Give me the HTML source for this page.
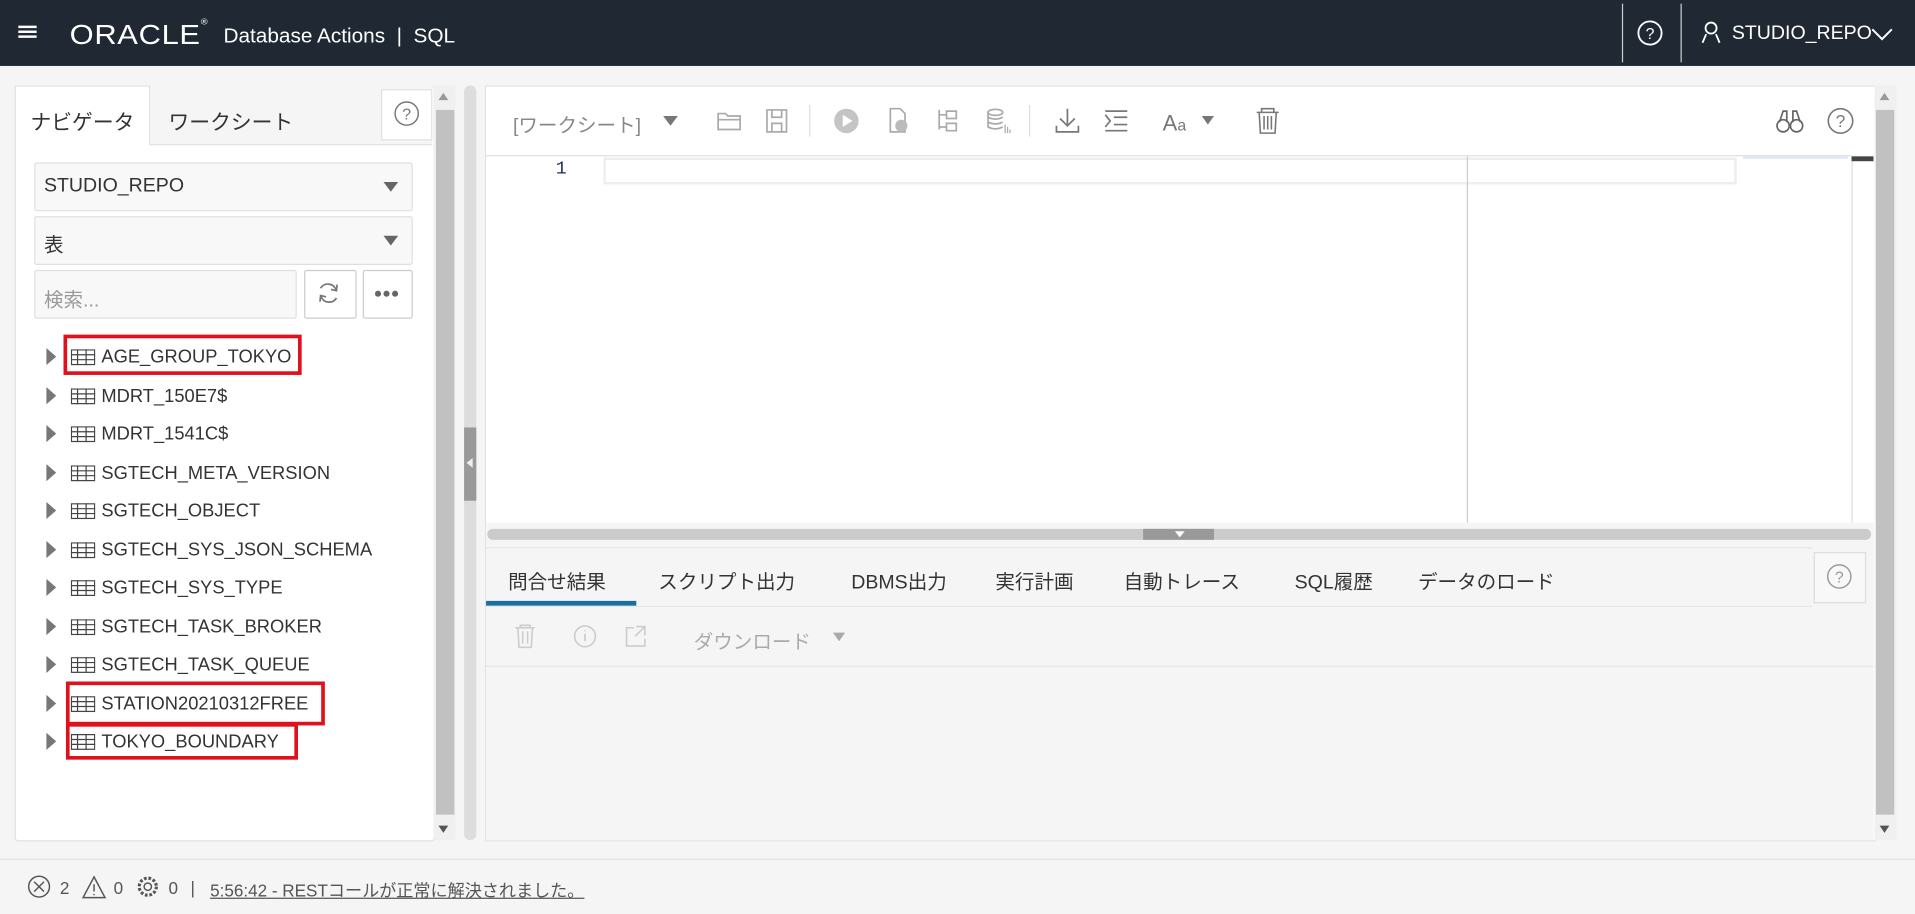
<!DOCTYPE html>
<html><head><meta charset="utf-8"><style>
html,body{margin:0;padding:0;width:1915px;height:914px;overflow:hidden;background:#f5f5f5}
#w{position:absolute;left:0;top:0;width:1568px;height:748px;transform:scale(1.22131);transform-origin:0 0;font-family:"Liberation Sans","Noto Sans CJK JP",sans-serif;color:#333;background:#f5f5f5}
.a{position:absolute}
.hdr{left:0;top:0;width:1568px;height:54px;background:#1f2833;color:#fff}
.t{font-size:16px;white-space:nowrap}
.box{background:#fff;border:1px solid #e2e2e2}
.sel{background:#f8f8f8;border:1px solid #e0e0e0;border-radius:2px}
.tri{width:0;height:0;border-left:6px solid transparent;border-right:6px solid transparent;border-top:8px solid #666}
.item{left:38px;height:31px;font-size:15px;color:#333}
.item .ar{position:absolute;left:0;top:5px;width:0;height:0;border-top:7px solid transparent;border-bottom:7px solid transparent;border-left:8px solid #777}
.item .ic{position:absolute;left:20px;top:6px}
.item span{position:absolute;left:45px;top:4px;white-space:nowrap}
.red{border:3px solid #e0101c}
.tab2{font-size:16px;color:#333;top:463px}
.g{stroke:#aaa;fill:none;stroke-width:1.4}
</style></head><body><div id="w">
<div class="a hdr">
 <div class="a" style="left:15px;top:21px;width:15px;height:2px;background:#fff;box-shadow:0 4px 0 #fff,0 8px 0 #fff"></div>
 <div class="a" style="left:57px;top:15px;font-size:23px;letter-spacing:0.5px;transform:scaleX(1.1);transform-origin:0 0">ORACLE<span style="font-size:7px;vertical-align:top">®</span></div>
 <div class="a t" style="left:183px;top:20px;font-size:17px">Database Actions &nbsp;| &nbsp;SQL</div>
 <div class="a" style="left:1328px;top:3px;width:1px;height:48px;background:#ccc"></div>
 <div class="a" style="left:1376px;top:3px;width:1px;height:48px;background:#ccc"></div>
 <svg class="a" style="left:1340px;top:16px" width="22" height="22"><circle cx="11" cy="11" r="9.5" fill="none" stroke="#fff" stroke-width="1.5"/><text x="11" y="16" font-size="13" fill="#fff" text-anchor="middle" font-family="Liberation Sans">?</text></svg>
 <svg class="a" style="left:1392px;top:17px" width="18" height="20"><circle cx="9" cy="6" r="4.5" fill="none" stroke="#fff" stroke-width="1.5"/><path d="M2 18 L5 11 M16 18 L13 11" stroke="#fff" stroke-width="1.5"/></svg>
 <div class="a t" style="left:1418px;top:19px;font-size:16px">STUDIO_REPO</div>
 <svg class="a" style="left:1531px;top:22px" width="20" height="12"><path d="M2 2 L10 10 L18 2" fill="none" stroke="#fff" stroke-width="1.6"/></svg>
</div>

<div class="a box" style="left:12px;top:70px;width:342px;height:617px;border-radius:3px"></div>
<div class="a" style="left:121px;top:70px;width:233px;height:48px;background:#f5f5f5;border-bottom:1px solid #e2e2e2"></div>
<div class="a" style="left:12px;top:70px;width:109px;height:48px;background:#fff;border:1px solid #e2e2e2;border-bottom:none"></div>
<div class="a t" style="left:25px;top:86px;font-size:17px">ナビゲータ</div>
<div class="a t" style="left:138px;top:86px;font-size:17px">ワークシート</div>
<div class="a box" style="left:312px;top:73px;width:40px;height:40px"></div>
<svg class="a" style="left:322px;top:82px" width="22" height="22"><circle cx="11" cy="11" r="9.5" fill="none" stroke="#777" stroke-width="1.2"/><text x="11" y="16" font-size="13" fill="#777" text-anchor="middle" font-family="Liberation Sans">?</text></svg>

<div class="a sel" style="left:28px;top:133px;width:308px;height:38px"></div>
<div class="a t" style="left:36px;top:144px">STUDIO_REPO</div>
<div class="a tri" style="left:314px;top:149px"></div>
<div class="a sel" style="left:28px;top:177px;width:308px;height:38px"></div>
<div class="a t" style="left:36px;top:187px">表</div>
<div class="a tri" style="left:314px;top:193px"></div>
<div class="a sel" style="left:28px;top:221px;width:213px;height:38px"></div>
<div class="a t" style="left:36px;top:232px;color:#999">検索...</div>
<div class="a box" style="left:249px;top:221px;width:41px;height:38px;border-color:#ccc;border-radius:2px"></div>
<svg class="a" style="left:259px;top:230px" width="20" height="20"><path d="M16 7 A7 7 0 0 0 3.5 6 M4 13 A7 7 0 0 0 16.5 14" fill="none" stroke="#777" stroke-width="1.4"/><path d="M17 3 L16.5 8 L12 7 M3 17 L3.5 12 L8 13" fill="none" stroke="#777" stroke-width="1.4"/></svg>
<div class="a box" style="left:297px;top:221px;width:39px;height:38px;border-color:#ccc;border-radius:2px"></div>
<div class="a" style="left:307px;top:238px;width:5px;height:5px;border-radius:50%;background:#666;box-shadow:7px 0 0 #666,14px 0 0 #666"></div>

<div id="items"></div>
<div class="a red" style="left:52px;top:274px;width:189px;height:27px"></div>
<div class="a red" style="left:54px;top:558px;width:206px;height:30px"></div>
<div class="a red" style="left:54px;top:592px;width:184px;height:24px"></div>

<div class="a" style="left:355px;top:70px;width:18px;height:618px;background:#f0f0f0"></div>
<div class="a" style="left:357px;top:90px;width:15px;height:577px;background:#c1c1c1"></div>
<div class="a" style="left:359px;top:76px;width:0;height:0;border-left:4px solid transparent;border-right:4px solid transparent;border-bottom:6px solid #999"></div>
<div class="a" style="left:359px;top:676px;width:0;height:0;border-left:4px solid transparent;border-right:4px solid transparent;border-top:6px solid #555"></div>
<div class="a" style="left:380px;top:70px;width:10px;height:618px;background:#ddd;border-radius:5px"></div>
<div class="a" style="left:380px;top:350px;width:10px;height:60px;background:#999"></div>
<div class="a" style="left:382px;top:375px;width:0;height:0;border-top:4px solid transparent;border-bottom:4px solid transparent;border-right:5px solid #eee"></div>

<div class="a box" style="left:397px;top:70px;width:1137px;height:617px"></div>
<div class="a" style="left:398px;top:127px;width:1118px;height:1px;background:#e0e0e0"></div>
<div class="a t" style="left:420px;top:89px;font-size:16px;color:#888">[ワークシート]</div>
<div class="a tri" style="left:543px;top:95px;border-top-color:#777"></div>
<svg class="a" style="left:586px;top:86px" width="480" height="26">
 <path class="g" d="M2 7 h6 l2 2 h10 v11 h-18z M2 12 h18"/>
 <path class="g" d="M42 4 h16 v18 h-16z M46 4 v6 h8 v-6 M46 22 v-7 h8 v7"/>
 <line x1="77" y1="0" x2="77" y2="26" stroke="#ddd"/>
 <circle cx="107" cy="13" r="10" fill="#c4c4c4"/><path d="M104 8 L112 13 L104 18z" fill="#fff"/>
 <path class="g" d="M143 3 h8 l4 4 v15 h-12z"/><circle cx="152" cy="17" r="5" fill="#bbb"/>
 <path class="g" d="M183 4 v16 M183 8 h6 M183 18 h6 M189 5 h8 v6 h-8z M189 15 h8 v6 h-8z"/>
 <ellipse class="g" cx="229" cy="6" rx="6" ry="2.5"/><path class="g" d="M223 6 v12 q6 3 12 0 M223 10 q6 3 12 0 M223 14 q6 3 12 0"/><path d="M237 16 v7 M239 18 v5 M241 20 v3" stroke="#aaa"/>
 <line x1="257" y1="0" x2="257" y2="26" stroke="#ddd"/>
 <path d="M288 3 v14 M282 11 l6 6 l6 -6 M279 17 v5 h18 v-5" fill="none" stroke="#777" stroke-width="1.4"/>
 <path d="M319 5 h18 M319 21 h18 M326 10 h11 M326 16 h11 M319 8 l4 5 l-4 5" fill="none" stroke="#777" stroke-width="1.4"/>
 <text x="366" y="21" font-size="18" fill="#777" font-family="Liberation Sans">A<tspan font-size="13">a</tspan></text>
 <path d="M398 9 h10 l-5 7z" fill="#777"/>
 <path d="M443 6 h18 M447 6 v-3 h10 v3 M445 6 l1 17 h12 l1 -17 M449 9 v11 M452 9 v11 M455 9 v11" fill="none" stroke="#777" stroke-width="1.3"/>
</svg>
<svg class="a" style="left:1454px;top:88px" width="24" height="22"><circle cx="6" cy="15" r="5" fill="none" stroke="#666" stroke-width="1.4"/><circle cx="17" cy="15" r="5" fill="none" stroke="#666" stroke-width="1.4"/><path d="M3 12 L6 3 h3 v9 M20 12 L17 3 h-3 v9" fill="none" stroke="#666" stroke-width="1.4"/></svg>
<svg class="a" style="left:1495px;top:87px" width="24" height="24"><circle cx="12" cy="12" r="10" fill="none" stroke="#777" stroke-width="1.3"/><text x="12" y="17" font-size="14" fill="#777" text-anchor="middle" font-family="Liberation Sans">?</text></svg>

<div class="a" style="left:455px;top:130px;font-family:'Liberation Mono',monospace;font-size:15px;color:#1a2a5a">1</div>
<div class="a" style="left:494px;top:129px;width:924px;height:18px;border:2px solid #eee"></div>
<div class="a" style="left:1201px;top:128px;width:1px;height:300px;background:#ccc"></div>
<div class="a" style="left:1427px;top:128px;width:86px;height:2px;background:#dde6f3"></div>
<div class="a" style="left:1516px;top:128px;width:1px;height:300px;background:#ddd"></div>
<div class="a" style="left:1516px;top:128px;width:18px;height:4px;background:#444"></div>

<div class="a" style="left:398px;top:428px;width:1136px;height:260px;background:#f5f5f5"></div>
<div class="a" style="left:399px;top:433px;width:1133px;height:9px;background:#cbcbcb;border-radius:5px"></div>
<div class="a" style="left:936px;top:433px;width:58px;height:9px;background:#999"></div>
<div class="a" style="left:962px;top:435px;width:0;height:0;border-left:4px solid transparent;border-right:4px solid transparent;border-top:5px solid #fff"></div>
<div class="a" style="left:398px;top:448px;width:1086px;height:1px;background:#e6e6e6"></div>
<div class="a tab2 t" style="left:416px">問合せ結果</div>
<div class="a tab2 t" style="left:539px">スクリプト出力</div>
<div class="a tab2 t" style="left:697px">DBMS出力</div>
<div class="a tab2 t" style="left:815px">実行計画</div>
<div class="a tab2 t" style="left:920px">自動トレース</div>
<div class="a tab2 t" style="left:1060px">SQL履歴</div>
<div class="a tab2 t" style="left:1161px">データのロード</div>
<div class="a" style="left:398px;top:492px;width:123px;height:4px;background:#1a6fa0"></div>
<div class="a" style="left:398px;top:496px;width:1086px;height:1px;background:#e6e6e6"></div>
<div class="a box" style="left:1485px;top:452px;width:41px;height:40px;background:#f8f8f8;border-color:#ddd"></div>
<svg class="a" style="left:1495px;top:461px" width="22" height="22"><circle cx="11" cy="11" r="9.5" fill="none" stroke="#999" stroke-width="1.2"/><text x="11" y="16" font-size="13" fill="#999" text-anchor="middle" font-family="Liberation Sans">?</text></svg>
<svg class="a" style="left:420px;top:509px" width="120" height="24"><path d="M2 5 h16 M6 5 v-2 h8 v2 M4 5 l1 16 h10 l1 -16 M8 8 v10 M12 8 v10" fill="none" stroke="#ccc" stroke-width="1.3"/><circle cx="59" cy="12" r="8.5" fill="none" stroke="#ccc" stroke-width="1.3"/><path d="M59 10 v6 M59 7 v1" stroke="#ccc" stroke-width="1.4"/><path d="M99 5 h-6 v15 h15 v-6 M101 4 h7 v7 M108 4 l-8 8" fill="none" stroke="#ccc" stroke-width="1.3"/></svg>
<div class="a t" style="left:568px;top:512px;color:#aaa">ダウンロード</div>
<div class="a" style="left:682px;top:518px;width:0;height:0;border-left:5px solid transparent;border-right:5px solid transparent;border-top:7px solid #aaa"></div>
<div class="a" style="left:398px;top:545px;width:1136px;height:1px;background:#e6e6e6"></div>

<div class="a" style="left:1535px;top:70px;width:18px;height:618px;background:#f0f0f0"></div>
<div class="a" style="left:1536px;top:90px;width:15px;height:577px;background:#c1c1c1"></div>
<div class="a" style="left:1539px;top:76px;width:0;height:0;border-left:4px solid transparent;border-right:4px solid transparent;border-bottom:6px solid #999"></div>
<div class="a" style="left:1539px;top:676px;width:0;height:0;border-left:4px solid transparent;border-right:4px solid transparent;border-top:6px solid #555"></div>

<div class="a" style="left:0;top:703px;width:1568px;height:1px;background:#e3e3e3"></div>
<svg class="a" style="left:22px;top:716px" width="120" height="22"><circle cx="10" cy="10" r="8.5" fill="none" stroke="#555" stroke-width="1.2"/><path d="M6 6 l8 8 M14 6 l-8 8" stroke="#555" stroke-width="1.2"/><path d="M55 2 L64 19 H46z M55 8 v6 M55 16 v1" fill="none" stroke="#555" stroke-width="1.2"/><circle cx="99" cy="10" r="3" fill="none" stroke="#555" stroke-width="1.2"/><circle cx="99" cy="10" r="7" fill="none" stroke="#555" stroke-width="2.6" stroke-dasharray="2.2 1.5"/></svg>
<div class="a t" style="left:49px;top:719px;font-size:14px;color:#555">2</div>
<div class="a t" style="left:93px;top:719px;font-size:14px;color:#555">0</div>
<div class="a t" style="left:138px;top:719px;font-size:14px;color:#555">0</div>
<div class="a t" style="left:156px;top:719px;font-size:14px;color:#555">|</div>
<div class="a t" style="left:172px;top:719px;font-size:14px;color:#555;text-decoration:underline">5:56:42 - RESTコールが正常に解決されました。</div>
</div>
<script>
var n=["AGE_GROUP_TOKYO","MDRT_150E7$","MDRT_1541C$","SGTECH_META_VERSION","SGTECH_OBJECT","SGTECH_SYS_JSON_SCHEMA","SGTECH_SYS_TYPE","SGTECH_TASK_BROKER","SGTECH_TASK_QUEUE","STATION20210312FREE","TOKYO_BOUNDARY"];
var h="";n.forEach(function(s,i){var y=280+i*31.5;h+='<div class="a item" style="top:'+y+'px;width:300px"><div class="ar"></div><svg class="ic" width="20" height="14"><rect x="0.5" y="0.5" width="19" height="12" fill="none" stroke="#444"/><path d="M0 4.5 h20 M0 8.5 h20 M5.5 0 v13 M12.5 0 v13" stroke="#444"/></svg><span>'+s+'</span></div>';});
document.getElementById("items").innerHTML=h;
</script>
</body></html>
